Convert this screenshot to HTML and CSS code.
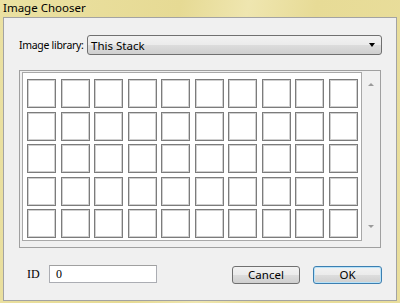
FILE: index.html
```html
<!DOCTYPE html>
<html lang="en">
<head>
    <meta charset="UTF-8">
    <meta name="viewport" content="width=device-width, initial-scale=1.0">
    <title>Image Chooser</title>
    <link rel="stylesheet" href="styles.css">
</head>
<body>
    <div class="window">
        <div class="title">Image Chooser</div>

        <div class="client">
            <div class="library-row">
                <span class="library-label">Image library:</span>
                <div class="select">
                    <span>This Stack</span>
                    <span class="select-arrow"></span>
                </div>
            </div>

            <div class="panel">
                <div class="image-grid">
                    <div class="cell"></div><div class="cell"></div><div class="cell"></div><div class="cell"></div><div class="cell"></div>
                    <div class="cell"></div><div class="cell"></div><div class="cell"></div><div class="cell"></div><div class="cell"></div>
                    <div class="cell"></div><div class="cell"></div><div class="cell"></div><div class="cell"></div><div class="cell"></div>
                    <div class="cell"></div><div class="cell"></div><div class="cell"></div><div class="cell"></div><div class="cell"></div>
                    <div class="cell"></div><div class="cell"></div><div class="cell"></div><div class="cell"></div><div class="cell"></div>
                    <div class="cell"></div><div class="cell"></div><div class="cell"></div><div class="cell"></div><div class="cell"></div>
                    <div class="cell"></div><div class="cell"></div><div class="cell"></div><div class="cell"></div><div class="cell"></div>
                    <div class="cell"></div><div class="cell"></div><div class="cell"></div><div class="cell"></div><div class="cell"></div>
                    <div class="cell"></div><div class="cell"></div><div class="cell"></div><div class="cell"></div><div class="cell"></div>
                    <div class="cell"></div><div class="cell"></div><div class="cell"></div><div class="cell"></div><div class="cell"></div>
                </div>
                <div class="scrollbar">
                    <span class="arrow-up"></span>
                    <span class="arrow-down"></span>
                </div>
            </div>

            <div class="bottom-row">
                <span class="id-label">ID</span>
                <div class="id-field">0</div>
                <button class="btn btn-cancel">Cancel</button>
                <button class="btn btn-ok">OK</button>
            </div>
        </div>
    </div>
</body>
</html>
```

FILE: styles.css
```css
body {
    margin: 0;
    padding: 0;
    font-family: "Noto Sans", sans-serif;
    font-size: 11px;
    color: #000;
}

.window {
    width: 400px;
    height: 303px;
    box-sizing: border-box;
    padding: 0 3px 2px 3px;
    background: linear-gradient(100deg, #ebe1a2 0%, #e6da94 40%, #efe6b0 55%, #e7db96 70%, #e9de9c 100%);
}

.title {
    height: 17px;
    line-height: 15px;
    font-size: 11.5px;
}

.client {
    height: 284px;
    box-sizing: border-box;
    background-color: #f0f0f0;
    border: 1px solid #a3a3a3;
}

.library-row {
    display: flex;
    align-items: center;
    margin-top: 17px;
    padding-left: 15px;
}

.library-label {
    flex-shrink: 0;
    width: 68px;
    white-space: nowrap;
    font-size: 10.5px;
    letter-spacing: -0.3px;
}

.select {
    width: 295px;
    height: 20px;
    box-sizing: border-box;
    border: 1px solid #707070;
    border-radius: 3px;
    background: linear-gradient(#f2f2f2 0%, #ebebeb 50%, #dddddd 50%, #cfcfcf 100%);
    display: flex;
    align-items: center;
    justify-content: space-between;
    padding: 0 6px 0 3px;
    font-size: 11.5px;
}

.select-arrow {
    width: 0;
    height: 0;
    border-left: 3px solid transparent;
    border-right: 3px solid transparent;
    border-top: 4px solid #000;
}

.panel {
    display: flex;
    width: 362px;
    height: 178px;
    box-sizing: border-box;
    margin: 15px 0 0 15px;
    border: 1px solid #a0a0a0;
    padding: 1px 0 6px 2px;
}

.image-grid {
    width: 340px;
    height: 169px;
    box-sizing: border-box;
    border: 1px solid #a8a8a8;
    background-color: #fff;
    padding: 6px 0 0 4px;
    display: grid;
    grid-template-columns: repeat(10, 29px);
    grid-template-rows: repeat(5, 29px);
    column-gap: 4.5px;
    row-gap: 3.6px;
    align-content: start;
}

.cell {
    box-sizing: border-box;
    border: 1px solid #7c7c7c;
    box-shadow: inset 0 0 0 1px #d0d0d0;
    background-color: #fff;
}

.scrollbar {
    width: 18px;
    display: flex;
    flex-direction: column;
    align-items: center;
    justify-content: space-between;
    padding: 11px 0 13px 0;
}

.arrow-up,
.arrow-down {
    width: 0;
    height: 0;
    border-left: 3px solid transparent;
    border-right: 3px solid transparent;
}

.arrow-up {
    border-bottom: 3px solid #9a9a9a;
}

.arrow-down {
    border-top: 3px solid #9a9a9a;
}

.bottom-row {
    display: flex;
    align-items: flex-start;
    margin-top: 17px;
    padding: 0 14px 0 23px;
}

.id-label {
    width: 22px;
    height: 18px;
    line-height: 18px;
    font-family: "Liberation Serif", serif;
    font-size: 12px;
}

.id-field {
    width: 108px;
    height: 18px;
    box-sizing: border-box;
    border: 1px solid #abadb3;
    border-top-color: #a0a0a0;
    background-color: #fff;
    padding-left: 6px;
    line-height: 16px;
    font-family: "Liberation Serif", serif;
    font-size: 12px;
}

.btn {
    height: 18px;
    box-sizing: border-box;
    margin-top: 1px;
    padding: 0;
    border: 1px solid #707070;
    border-radius: 3px;
    background: linear-gradient(#f2f2f2 0%, #ebebeb 50%, #dddddd 50%, #cfcfcf 100%);
    font-family: "Noto Sans", sans-serif;
    font-size: 11.5px;
    line-height: 14px;
    color: #000;
}

.btn-cancel {
    width: 68px;
    margin-left: auto;
}

.btn-ok {
    width: 69px;
    margin-left: 13px;
    border-color: #3c7fb1;
    box-shadow: inset 0 0 0 1px #b8e2f8;
}
```
